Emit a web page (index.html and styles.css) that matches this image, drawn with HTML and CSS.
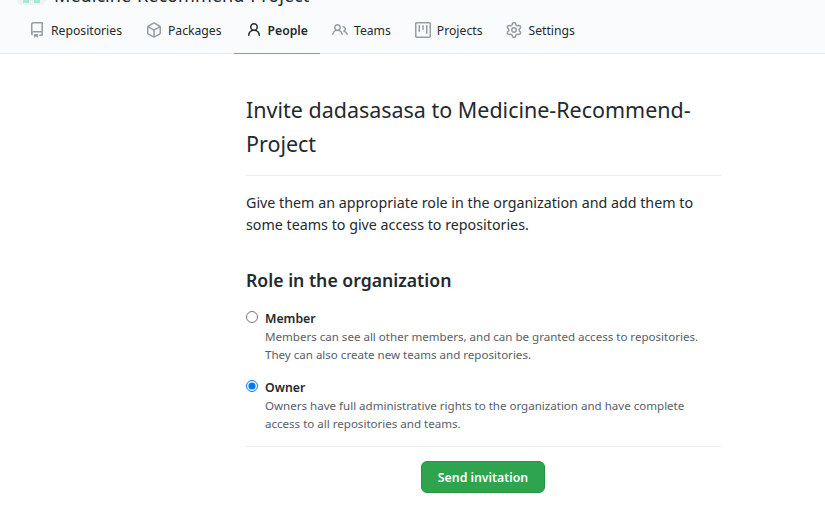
FILE: index.html
```html
<!DOCTYPE html>
<html lang="en">
<head>
<meta charset="utf-8">
<title>Invite dadasasasa</title>
<link rel="stylesheet" href="styles.css">
</head>
<body>
<header class="org-header">
  <div class="org-title">
    <span class="org-avatar"><i></i><i></i></span>
    <span class="org-name">Medicine-Recommend-Project</span>
  </div>
  <nav class="tabs">
    <a class="tab">
      <svg class="icon" viewBox="0 0 16 16"><path d="M2 2.5A2.5 2.5 0 0 1 4.5 0h8.75a.75.75 0 0 1 .75.75v12.5a.75.75 0 0 1-.75.75h-2.5a.75.75 0 0 1 0-1.5h1.75v-2h-8a1 1 0 0 0-.714 1.7.75.75 0 1 1-1.072 1.05A2.495 2.495 0 0 1 2 11.5Zm10.5-1h-8a1 1 0 0 0-1 1v6.708A2.486 2.486 0 0 1 4.5 9h8ZM5 12.25a.25.25 0 0 1 .25-.25h3.5a.25.25 0 0 1 .25.25v3.25a.25.25 0 0 1-.4.2l-1.45-1.087a.249.249 0 0 0-.3 0L5.4 15.7a.25.25 0 0 1-.4-.2Z"/></svg>
      <span class="tab-label">Repositories</span>
    </a>
    <a class="tab">
      <svg class="icon" viewBox="0 0 16 16"><path d="m8.878.392 5.25 3.045c.54.314.872.89.872 1.514v6.098a1.75 1.75 0 0 1-.872 1.514l-5.25 3.045a1.75 1.75 0 0 1-1.756 0l-5.25-3.045A1.75 1.75 0 0 1 1 11.049V4.951c0-.624.332-1.201.872-1.514L7.122.392a1.75 1.75 0 0 1 1.756 0ZM7.875 1.69l-4.63 2.685L8 7.133l4.755-2.758-4.63-2.685a.248.248 0 0 0-.25 0ZM2.5 5.677v5.372c0 .09.047.171.125.216l4.625 2.683V8.432Zm6.25 8.271 4.625-2.683a.25.25 0 0 0 .125-.216V5.677L8.75 8.432Z"/></svg>
      <span class="tab-label">Packages</span>
    </a>
    <a class="tab tab-active">
      <svg class="icon" viewBox="0 0 16 16"><path d="M10.561 8.073a6.005 6.005 0 0 1 3.432 5.142.75.75 0 1 1-1.498.07 4.5 4.5 0 0 0-8.99 0 .75.75 0 0 1-1.498-.07 6.004 6.004 0 0 1 3.431-5.142 3.999 3.999 0 1 1 5.123 0ZM10.5 5a2.5 2.5 0 1 0-5 0 2.5 2.5 0 0 0 5 0Z"/></svg>
      <span class="tab-label">People</span>
    </a>
    <a class="tab">
      <svg class="icon" viewBox="0 0 16 16"><path d="M2 5.5a3.5 3.5 0 1 1 5.898 2.549 5.508 5.508 0 0 1 3.034 4.084.75.75 0 1 1-1.482.235 4 4 0 0 0-7.9 0 .75.75 0 0 1-1.482-.236A5.507 5.507 0 0 1 3.102 8.05 3.493 3.493 0 0 1 2 5.5ZM11 4a3.001 3.001 0 0 1 2.22 5.018 5.01 5.01 0 0 1 2.56 3.012.749.749 0 0 1-.885.954.752.752 0 0 1-.549-.514 3.507 3.507 0 0 0-2.522-2.372.75.75 0 0 1-.574-.73v-.352a.75.75 0 0 1 .416-.672A1.5 1.5 0 0 0 11 5.5.75.75 0 0 1 11 4Zm-5.5-.5a2 2 0 1 0-.001 3.999A2 2 0 0 0 5.5 3.5Z"/></svg>
      <span class="tab-label">Teams</span>
    </a>
    <a class="tab">
      <svg class="icon" viewBox="0 0 16 16"><path d="M1.75 0h12.5C15.216 0 16 .784 16 1.75v12.5A1.75 1.75 0 0 1 14.25 16H1.75A1.75 1.75 0 0 1 0 14.25V1.75C0 .784.784 0 1.75 0ZM1.5 1.75v12.5c0 .138.112.25.25.25h12.5a.25.25 0 0 0 .25-.25V1.75a.25.25 0 0 0-.25-.25H1.75a.25.25 0 0 0-.25.25ZM11.75 3a.75.75 0 0 1 .75.75v7.5a.75.75 0 0 1-1.5 0v-7.5a.75.75 0 0 1 .75-.75Zm-8.25.75a.75.75 0 0 1 1.5 0v5.5a.75.75 0 0 1-1.5 0ZM8 3a.75.75 0 0 1 .75.75v3.5a.75.75 0 0 1-1.5 0v-3.5A.75.75 0 0 1 8 3Z"/></svg>
      <span class="tab-label">Projects</span>
    </a>
    <a class="tab">
      <svg class="icon" viewBox="0 0 16 16"><path d="M8 0a8.2 8.2 0 0 1 .701.031C9.444.095 9.99.645 10.16 1.29l.288 1.107c.018.066.079.158.212.224.231.114.454.243.668.386.123.082.233.09.299.071l1.103-.303c.644-.176 1.392.021 1.82.63.27.385.506.792.704 1.218.315.675.111 1.422-.364 1.891l-.814.806c-.049.048-.098.147-.088.294.016.257.016.515 0 .772-.01.147.038.246.088.294l.814.806c.475.469.679 1.216.364 1.891a7.977 7.977 0 0 1-.704 1.217c-.428.61-1.176.807-1.82.63l-1.102-.302c-.067-.019-.177-.011-.3.071a5.909 5.909 0 0 1-.668.386c-.133.066-.194.158-.211.224l-.29 1.106c-.168.646-.715 1.196-1.458 1.26a8.006 8.006 0 0 1-1.402 0c-.743-.064-1.289-.614-1.458-1.26l-.289-1.106c-.018-.066-.079-.158-.212-.224a5.738 5.738 0 0 1-.668-.386c-.123-.082-.233-.09-.299-.071l-1.103.303c-.644.176-1.392-.021-1.82-.63a8.12 8.12 0 0 1-.704-1.218c-.315-.675-.111-1.422.363-1.891l.815-.806c.05-.048.098-.147.088-.294a6.214 6.214 0 0 1 0-.772c.01-.147-.038-.246-.088-.294l-.815-.806C.635 6.045.431 5.298.746 4.623a7.92 7.92 0 0 1 .704-1.217c.428-.61 1.176-.807 1.82-.63l1.102.302c.067.019.177.011.3-.071.214-.143.437-.272.668-.386.133-.066.194-.158.211-.224l.29-1.106C6.009.645 6.556.095 7.299.03 7.53.01 7.764 0 8 0Zm-.571 1.525c-.036.003-.108.036-.137.146l-.289 1.105c-.147.561-.549.967-.998 1.189-.173.086-.34.183-.5.29-.417.278-.97.423-1.529.27l-1.103-.303c-.109-.03-.175.016-.195.045-.22.312-.412.644-.573.99-.014.031-.021.11.059.19l.815.806c.411.406.562.957.53 1.456a4.709 4.709 0 0 0 0 .582c.032.499-.119 1.05-.53 1.456l-.815.806c-.081.08-.073.159-.059.19.162.346.353.677.573.989.02.03.085.076.195.046l1.102-.303c.56-.153 1.113-.008 1.53.27.161.107.328.204.501.29.447.222.85.629.997 1.189l.289 1.105c.029.109.101.143.137.146a6.6 6.6 0 0 0 1.142 0c.036-.003.108-.036.137-.146l.289-1.105c.147-.561.549-.967.998-1.189.173-.086.34-.183.5-.29.417-.278.97-.423 1.529-.27l1.103.303c.109.029.175-.016.195-.045.22-.313.411-.644.573-.99.014-.031.021-.11-.059-.19l-.815-.806c-.411-.406-.562-.957-.53-1.456a4.709 4.709 0 0 0 0-.582c-.032-.499.119-1.05.53-1.456l.815-.806c.081-.08.073-.159.059-.19a6.464 6.464 0 0 0-.573-.989c-.02-.03-.085-.076-.195-.046l-1.102.303c-.56.153-1.113.008-1.53-.27a4.44 4.44 0 0 0-.501-.29c-.447-.222-.85-.629-.997-1.189l-.289-1.105c-.029-.11-.101-.143-.137-.146a6.6 6.6 0 0 0-1.142 0ZM11 8a3 3 0 1 1-6 0 3 3 0 0 1 6 0ZM9.5 8a1.5 1.5 0 1 0-3.001.001A1.5 1.5 0 0 0 9.5 8Z"/></svg>
      <span class="tab-label">Settings</span>
    </a>
  </nav>
</header>
<main class="content">
  <h1 class="title">Invite dadasasasa to Medicine-Recommend-Project</h1>
  <p class="lead">Give them an appropriate role in the organization and add them to some teams to give access to repositories.</p>
  <h2 class="section">Role in the organization</h2>
  <form class="roles">
    <label class="role">
      <input class="radio" type="radio" name="role">
      <span class="role-text">
        <strong class="role-name">Member</strong>
        <span class="role-note">Members can see all other members, and can be granted access to repositories. They can also create new teams and repositories.</span>
      </span>
    </label>
    <label class="role">
      <input class="radio" type="radio" name="role" checked>
      <span class="role-text">
        <strong class="role-name">Owner</strong>
        <span class="role-note">Owners have full administrative rights to the organization and have complete access to all repositories and teams.</span>
      </span>
    </label>
    <div class="actions">
      <button class="send" type="button">Send invitation</button>
    </div>
  </form>
</main>
</body>
</html>
```
FILE: styles.css
```css
* { box-sizing: border-box; }
html, body { margin: 0; padding: 0; }
body {
  height: 524px;
  overflow: hidden;
  background: #fff;
  color: #24292e;
  font-family: "Noto Sans", "Open Sans", sans-serif;
}
.org-header {
  height: 54px;
  background: #fafbfc;
  border-bottom: 1px solid #e8eaec;
  display: flex;
  flex-direction: column;
  justify-content: flex-end;
}
.org-title {
  height: 6px;
  flex: none;
  padding-left: 17px;
  display: flex;
  align-items: flex-end;
  gap: 8px;
  margin-bottom: 3px;
}
.org-avatar {
  flex: none;
  width: 29px;
  height: 12px;
  padding: 0 6px 2px;
  background: #eff1f3;
  border-radius: 0 0 5px 5px;
  display: flex;
  align-items: flex-end;
  gap: 5px;
}
.org-avatar i { width: 6px; height: 5px; background: #a3e8d9; }
.org-name {
  font-size: 18.1px;
  line-height: 26px;
  white-space: nowrap;
  margin-bottom: -3px;
}
.tabs {
  display: flex;
  height: 45px;
  padding: 0 0 2px 17px;
  flex: none;
}
.tab {
  display: flex;
  align-items: center;
  gap: 6px;
  padding: 0 12px;
  font-size: 12.2px;
  color: #24292e;
  position: relative;
}
.tab-label { padding-top: 1px; }
.icon { width: 16px; height: 16px; fill: #959da5; flex: none; }
.tab-active { font-weight: 600; }
.tab-active .icon { fill: #24292e; }
.tab-active::after {
  content: "";
  position: absolute;
  left: 0; right: 0; bottom: -3px;
  height: 1px;
  background: #e6765f;
}
.content { width: 475px; margin-left: 246px; }
.title {
  margin: 39px 0 0;
  padding-bottom: 14px;
  border-bottom: 1px solid #eaecef;
  font-size: 21.47px;
  line-height: 34px;
  font-weight: 400;
}
.lead {
  margin: 15.5px 0 0;
  font-size: 14.28px;
  line-height: 22.5px;
}
.section {
  margin: 31.5px 0 0;
  font-size: 17.65px;
  line-height: 24px;
  font-weight: 600;
}
.roles { margin-top: 16px; }
.role { display: flex; gap: 7px; margin-bottom: 13px; }
.radio { width: 12px; height: 12px; margin: 3px 0 0; flex: none; }
.role-text { display: block; }
.role-name {
  display: block;
  padding-top: 1px;
  font-size: 12.3px;
  line-height: 19px;
  font-weight: 600;
}
.role-note {
  display: block;
  font-size: 11.55px;
  line-height: 18px;
  color: #586069;
}
.actions {
  border-top: 1px solid #eaecef;
  padding: 14px 1px 0 0;
  display: flex;
  justify-content: center;
}
.send {
  width: 124px;
  height: 32px;
  padding: 1px 0 0;
  background: #2ea44f;
  color: #fff;
  border: 1px solid #2a9346;
  border-radius: 6px;
  font: 600 12.3px/20px "Noto Sans", sans-serif;
}
```
